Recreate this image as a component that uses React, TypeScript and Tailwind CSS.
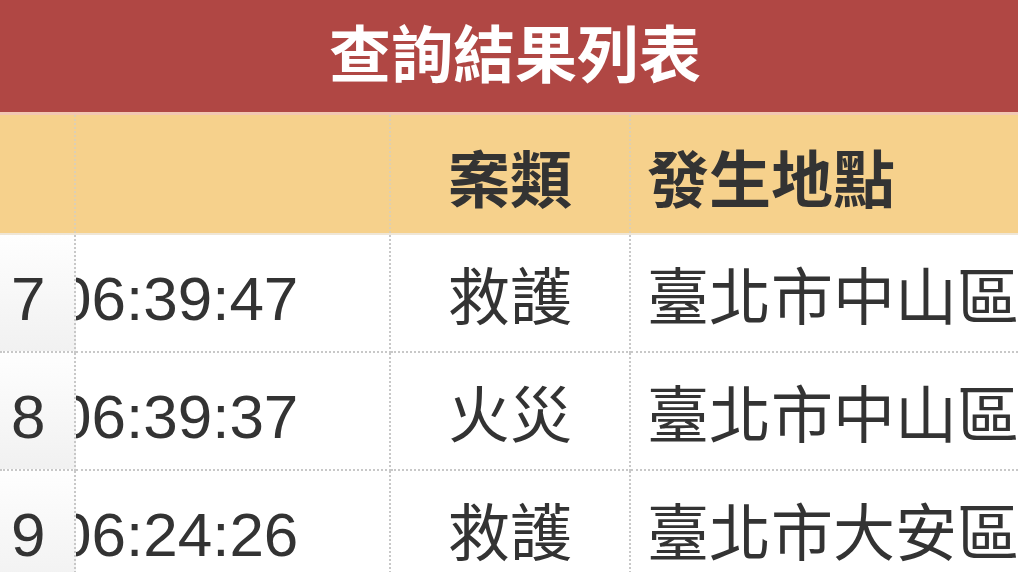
import React from "react";

const rows = [
  { n: "7", t: "06:39:47", c: "救護", p: "臺北市中山區" },
  { n: "8", t: "06:39:37", c: "火災", p: "臺北市中山區" },
  { n: "9", t: "06:24:26", c: "救護", p: "臺北市大安區" },
];

export default function App() {
  return (
    <div
      className="w-[1018px] h-[572px] overflow-hidden bg-white text-[#333333]"
      style={{ fontFamily: '"Liberation Sans", "Noto Sans CJK TC", sans-serif' }}
    >
      <div className="h-[112px] bg-[#b04744] flex items-center justify-center text-white font-bold text-[62px] leading-none pt-[2px] pl-[12px]">
        查詢結果列表
      </div>
      <div className="h-[3px] bg-[#f2c7b2]" />
      <div className="grid grid-cols-[76px_315px_240px_1fr]">
        <div className="h-[118px] bg-[#f6d18c] border-r-2 border-dotted border-[#dccfb3]" />
        <div className="h-[118px] bg-[#f6d18c] border-r-2 border-dotted border-[#dccfb3]" />
        <div className="h-[118px] bg-[#f6d18c] border-r-2 border-dotted border-[#dccfb3] flex items-center justify-center font-bold text-[62px] leading-none pt-[16px]">
          案類
        </div>
        <div className="h-[118px] bg-[#f6d18c] flex items-center pl-[16px] font-bold text-[62px] leading-none pt-[16px] whitespace-nowrap">
          發生地點
        </div>
        <div className="col-span-4 h-[2px] bg-[#efe6d6]" />
        {rows.map((r) => (
          <React.Fragment key={r.n}>
            <div className="h-[118px] bg-linear-to-b from-[#fefefe] to-[#f1f1f1] border-r-2 border-b-2 border-dotted border-[#c8c8c8] flex items-center pl-[11px] text-[62px] leading-none pt-[12px] relative z-10">
              {r.n}
            </div>
            <div className="h-[118px] border-r-2 border-b-2 border-dotted border-[#c8c8c8] flex items-center overflow-hidden text-[62px] leading-none pt-[12px]">
              <span className="-ml-[19px] whitespace-nowrap">{r.t}</span>
            </div>
            <div className="h-[118px] border-r-2 border-b-2 border-dotted border-[#c8c8c8] flex items-center justify-center text-[62px] leading-none pt-[12px]">
              {r.c}
            </div>
            <div className="h-[118px] border-b-2 border-dotted border-[#c8c8c8] flex items-center pl-[16px] text-[62px] leading-none whitespace-nowrap overflow-hidden pt-[12px]">
              {r.p}
            </div>
          </React.Fragment>
        ))}
      </div>
    </div>
  );
}
